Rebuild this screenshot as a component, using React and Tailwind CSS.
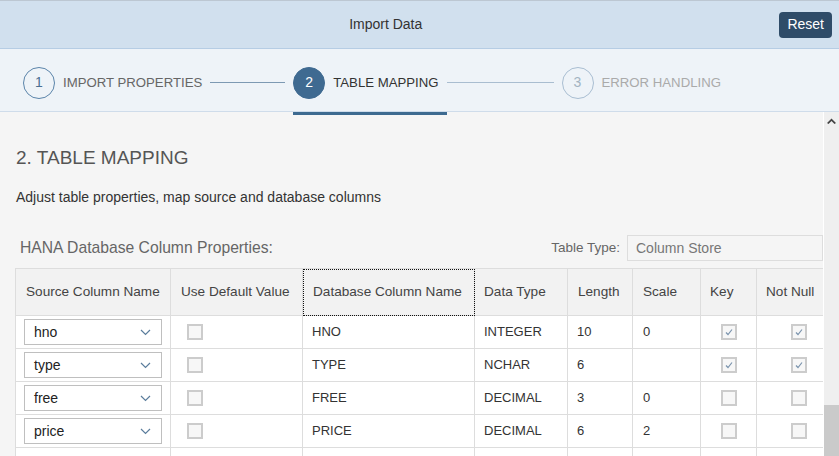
import React from 'react';

const font = { fontFamily: '"Liberation Sans", Arial, sans-serif' };

const rows = [
  { src: 'hno', db: 'HNO', type: 'INTEGER', len: '10', scale: '0', key: true, nn: true },
  { src: 'type', db: 'TYPE', type: 'NCHAR', len: '6', scale: '', key: true, nn: true },
  { src: 'free', db: 'FREE', type: 'DECIMAL', len: '3', scale: '0', key: false, nn: false },
  { src: 'price', db: 'PRICE', type: 'DECIMAL', len: '6', scale: '2', key: false, nn: false },
  { src: '', db: '', type: '', len: '', scale: '', key: false, nn: false },
];

const Chevron = () => (
  <svg width="11" height="7" viewBox="0 0 11 7" className="shrink-0">
    <polyline points="1,1 5.5,5.5 10,1" fill="none" stroke="#5b7d9c" strokeWidth="1.2" />
  </svg>
);

const Checkbox = ({ checked }) => (
  <div className="w-4 h-4 border-2 border-[#cccccc] bg-[#f7f7f7] flex items-center justify-center">
    {checked && (
      <svg width="10" height="10" viewBox="0 0 10 10">
        <polyline points="2,5.5 4,7.5 8,2.5" fill="none" stroke="#7a93ad" strokeWidth="1.2" />
      </svg>
    )}
  </div>
);

const Step = ({ num, label, state }) => {
  const circle =
    state === 'active'
      ? 'bg-[#3f6a91] text-white border-[#3f6a91]'
      : state === 'done'
      ? 'border-[#5b84aa] text-[#4a6f92]'
      : 'border-[#a9bed2] text-[#a3b3c2]';
  const text =
    state === 'active' ? 'text-[#333333]' : state === 'done' ? 'text-[#666666]' : 'text-[#aaaaaa]';
  return (
    <div className="flex items-center gap-[8px]">
      <div className={`w-[32px] h-[32px] rounded-full border flex items-center justify-center text-[14px] ${circle}`}>
        {num}
      </div>
      <span className={`text-[13.2px] ${text}`}>{label}</span>
    </div>
  );
};

const thBase = 'border border-[#dddddd] font-normal text-left';

const App = () => {
  return (
    <div style={font} className="w-[839px] h-[456px] overflow-hidden flex flex-col bg-[#f5f5f5]">
      {/* Title bar */}
      <div className="h-[49px] shrink-0 flex items-center border-t border-[#bcc7d2] border-b border-b-[#b6cde4] bg-[#d1e0ee]">
        <div className="flex-1 text-center text-[14px] text-[#333333]">Import Data</div>
        <button className="ml-[8px] mr-[7px] h-[26px] px-[8px] rounded-[4px] bg-[#2f4c68] text-white text-[14px]">
          Reset
        </button>
      </div>

      {/* Wizard steps */}
      <div className="h-[63px] shrink-0 flex items-center pl-[23px] pt-[5px] bg-[#eef3f8] border-b border-[#cfdcea]">
        <Step num="1" label="IMPORT PROPERTIES" state="done" />
        <div className="w-[75px] h-px bg-[#7d99b3] mx-[8px]" />
        <Step num="2" label="TABLE MAPPING" state="active" />
        <div className="w-[107px] h-px bg-[#a9bdd0] mx-[8px]" />
        <Step num="3" label="ERROR HANDLING" state="todo" />
      </div>

      {/* Content + scrollbar */}
      <div className="flex-1 flex min-h-0">
        <div className="flex-1 min-w-0 overflow-hidden flex flex-col">
          <div className="h-[3px] shrink-0 flex">
            <div className="ml-[293px] w-[154px] bg-[#3d6a90]" />
          </div>
          <div className="pl-[15px] flex flex-col">
            <h2 className="mt-[31px] pl-px text-[19px] leading-[24px] text-[#555555]">2. TABLE MAPPING</h2>
            <p className="mt-[19px] pl-px text-[14px] leading-[16px] text-[#333333]">
              Adjust table properties, map source and database columns
            </p>
            <div className="mt-[30px] h-[26px] flex items-center">
              <span className="pl-[5px] text-[15.7px] text-[#666666]">HANA Database Column Properties:</span>
              <div className="flex-1" />
              <span className="text-[13.5px] text-[#666666] mr-[7px]">Table Type:</span>
              <div className="w-[196px] h-[26px] border border-[#dddddd] bg-[#f5f5f5] flex items-center pl-[8px] text-[14px] text-[#777777]">
                Column Store
              </div>
            </div>
            <table className="mt-[7px] border-collapse table-fixed w-[826px] bg-white text-[13px]">
              <colgroup>
                <col className="w-[155px]" />
                <col className="w-[132px]" />
                <col className="w-[172px]" />
                <col className="w-[93px]" />
                <col className="w-[65px]" />
                <col className="w-[68px]" />
                <col className="w-[56px]" />
                <col className="w-[85px]" />
              </colgroup>
              <thead>
                <tr className="h-[47px] bg-[#f2f2f2] text-[#444444] text-[13.6px]">
                  <th className={`${thBase} pl-[10px]`}>Source Column Name</th>
                  <th className={`${thBase} pl-[10px]`}>Use Default Value</th>
                  <th className={`${thBase} pl-[10px] outline-1 outline-dotted outline-[#111111] -outline-offset-1`}>
                    Database Column Name
                  </th>
                  <th className={`${thBase} pl-[9px]`}>Data Type</th>
                  <th className={`${thBase} pl-[10px]`}>Length</th>
                  <th className={`${thBase} pl-[10px]`}>Scale</th>
                  <th className={`${thBase} pl-[9px]`}>Key</th>
                  <th className={`${thBase} pl-[9px]`}>Not Null</th>
                </tr>
              </thead>
              <tbody className="text-[#333333]">
                {rows.map((r, i) => (
                  <tr key={i} className="h-[33px]">
                    <td className="border border-[#dddddd] px-[8px]">
                      {r.src && (
                        <div className="h-[26px] border border-[#bfbfbf] bg-white flex items-center justify-between pl-[9px] pr-[10px] text-[14px] text-[#222222]">
                          <span>{r.src}</span>
                          <Chevron />
                        </div>
                      )}
                    </td>
                    <td className="border border-[#dddddd] pl-[16px]">
                      {r.src && <Checkbox checked={false} />}
                    </td>
                    <td className="border border-[#dddddd] pl-[9px]">{r.db}</td>
                    <td className="border border-[#dddddd] pl-[9px]">{r.type}</td>
                    <td className="border border-[#dddddd] pl-[9px]">{r.len}</td>
                    <td className="border border-[#dddddd] pl-[10px]">{r.scale}</td>
                    <td className="border border-[#dddddd]">
                      {r.src && (
                        <div className="flex justify-center">
                          <Checkbox checked={r.key} />
                        </div>
                      )}
                    </td>
                    <td className="border border-[#dddddd]">
                      {r.src && (
                        <div className="flex justify-center">
                          <Checkbox checked={r.nn} />
                        </div>
                      )}
                    </td>
                  </tr>
                ))}
              </tbody>
            </table>
          </div>
        </div>

        {/* Scrollbar */}
        <div className="w-[16px] shrink-0 bg-[#efefef] border-l border-white flex flex-col">
          <div className="h-[16px] flex items-center justify-center mt-[1px]">
            <svg width="9" height="6" viewBox="0 0 9 6">
              <polygon points="0,5 4.5,0.5 9,5 7.5,6 4.5,3 1.5,6" fill="#444444" />
            </svg>
          </div>
          <div className="flex-1" />
          <div className="h-[51px] bg-[#cacaca]" />
        </div>
      </div>
    </div>
  );
};

export default App;
